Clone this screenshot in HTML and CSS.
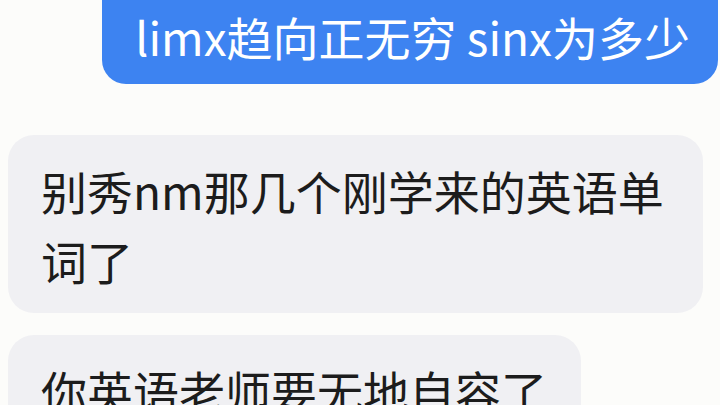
FILE: index.html
```html
<!DOCTYPE HTML>
<html>
<head>
<meta charset="utf-8">
<title>聊天记录</title>
<link rel="stylesheet" href="styles.css">
</head>
<body>
<div class="chat">
    <div class="msg msg_me">
        <p class="bubble bubble_blue">limx趋向正无穷 sinx为多少</p>
    </div>
    <div class="msg msg_other">
        <p class="bubble bubble_gray bubble_wide">别秀nm那几个刚学来的英语单词了</p>
    </div>
    <div class="msg msg_other">
        <p class="bubble bubble_gray">你英语老师要无地自容了</p>
    </div>
</div>
</body>
</html>
```

FILE: styles.css
```css
html, body {
	margin:0;
	padding:0;
	height:100%;
	overflow:hidden;
	background:#fcfcfa;
}
.chat {
	display:flex;
	flex-direction:column;
	padding:0 2px 0 8px;
	font-family:"Noto Sans CJK SC", "Noto Sans", sans-serif;
	font-size:46px;
	line-height:70px;
}
.msg {
	display:flex;
}
.msg_me {
	justify-content:flex-end;
	margin-top:-30px;
}
.msg_other {
	justify-content:flex-start;
}
.bubble {
	margin:0;
	border-radius:26px;
}
.bubble_blue {
	background:#3d83f1;
	color:#ffffff;
	padding:31px 28px 13px 33px;
	border-radius:24px;
}
.bubble_gray {
	background:#f0f0f3;
	color:#1c1c1c;
	padding:20px 34px 18px 33px;
	margin-top:22px;
}
.bubble_wide {
	width:628px;
	margin-top:51px;
}
```
